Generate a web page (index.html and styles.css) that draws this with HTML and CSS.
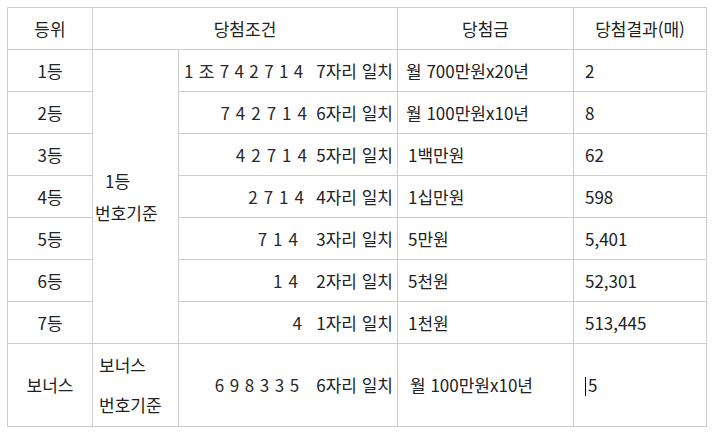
FILE: index.html
```html
<!DOCTYPE html>
<html lang="ko">
<head>
<meta charset="utf-8">
<title>당첨결과</title>
<link rel="stylesheet" href="styles.css">
</head>
<body>
<table class="result">
  <colgroup>
    <col class="c-rank">
    <col class="c-basis">
    <col class="c-cond">
    <col class="c-prize">
    <col class="c-count">
  </colgroup>
  <thead>
    <tr>
      <th>등위</th>
      <th colspan="2">당첨조건</th>
      <th>당첨금</th>
      <th>당첨결과(매)</th>
    </tr>
  </thead>
  <tbody>
    <tr>
      <td class="rank">1등</td>
      <td class="basis" rowspan="7"><div class="basis-l1">1등</div><div class="basis-l2">번호기준</div></td>
      <td class="cond"><span class="num num-first">1 조 7 4 2 7 1 4</span> 7자리 일치</td>
      <td class="prize">월 700만원x20년</td>
      <td class="count">2</td>
    </tr>
    <tr>
      <td class="rank">2등</td>
      <td class="cond"><span class="num">7 4 2 7 1 4</span> 6자리 일치</td>
      <td class="prize">월 100만원x10년</td>
      <td class="count">8</td>
    </tr>
    <tr>
      <td class="rank">3등</td>
      <td class="cond"><span class="num">4 2 7 1 4</span> 5자리 일치</td>
      <td class="prize prize-b">1백만원</td>
      <td class="count">62</td>
    </tr>
    <tr>
      <td class="rank">4등</td>
      <td class="cond"><span class="num num-mid">2 7 1 4</span> 4자리 일치</td>
      <td class="prize prize-b">1십만원</td>
      <td class="count">598</td>
    </tr>
    <tr>
      <td class="rank">5등</td>
      <td class="cond"><span class="num num-wide">7 1 4</span> 3자리 일치</td>
      <td class="prize prize-b">5만원</td>
      <td class="count">5,401</td>
    </tr>
    <tr>
      <td class="rank">6등</td>
      <td class="cond"><span class="num num-wide">1 4</span> 2자리 일치</td>
      <td class="prize prize-b">5천원</td>
      <td class="count">52,301</td>
    </tr>
    <tr>
      <td class="rank">7등</td>
      <td class="cond"><span class="num num-short">4</span> 1자리 일치</td>
      <td class="prize prize-b">1천원</td>
      <td class="count">513,445</td>
    </tr>
    <tr class="bonus">
      <td class="rank">보너스</td>
      <td class="basis basis-bonus"><div>보너스</div><div>번호기준</div></td>
      <td class="cond"><span class="num num-bonus">6 9 8 3 3 5</span> 6자리 일치</td>
      <td class="prize prize-c">월 100만원x10년</td>
      <td class="count count-cursor"><span class="cursor"></span>5</td>
    </tr>
  </tbody>
</table>
</body>
</html>
```

FILE: styles.css
```css
html, body {
  margin: 0;
  background: #ffffff;
}

body {
  padding: 7px 0 0 7px;
  font-family: "Noto Sans CJK KR", "Noto Sans", sans-serif;
  font-size: 17px;
  color: #222222;
}

.result {
  border-collapse: collapse;
  table-layout: fixed;
  width: 699px;
}

.c-rank { width: 85px; }
.c-basis { width: 86px; }
.c-cond { width: 219px; }
.c-prize { width: 176px; }
.c-count { width: 133px; }

.result tr {
  height: 42px;
}

.result tr.bonus {
  height: 83px;
}

.result th,
.result td {
  border: 1px solid #cdcdcd;
  padding: 0;
  line-height: 20px;
  vertical-align: middle;
  font-weight: 400;
  white-space: nowrap;
}

.result th {
  text-align: center;
}

.result .rank {
  text-align: center;
}

.result .basis {
  text-align: left;
  padding-left: 2px;
}

.basis-l1 {
  line-height: 32px;
  padding-left: 10px;
}

.basis-l2 {
  line-height: 32px;
}

.result .basis-bonus {
  padding-left: 6px;
}

.basis-bonus div {
  line-height: 40px;
}

.result .cond {
  text-align: right;
  padding-right: 4px;
  white-space: pre;
}

.num {
  display: inline-block;
  letter-spacing: 0.6px;
  margin-right: 4px;
  color: #2a2a2a;
}

.num-first {
  letter-spacing: 0.3px;
  margin-right: 8px;
}

.num-mid {
  margin-right: 7px;
}

.num-wide {
  margin-right: 13px;
}

.num-bonus {
  letter-spacing: 0.4px;
  margin-right: 12px;
}

.num-short {
  margin-right: 9px;
}

.result .prize {
  padding-left: 8px;
}

.result .prize-b {
  padding-left: 10px;
}

.result .prize-c {
  padding-left: 12px;
}

.result .count {
  padding-left: 11px;
}

.result .count-cursor {
  padding-left: 11px;
}

.cursor {
  display: inline-block;
  width: 0;
  height: 19px;
  border-left: 1px solid #000000;
  margin-right: 2px;
  vertical-align: -4px;
}
```
